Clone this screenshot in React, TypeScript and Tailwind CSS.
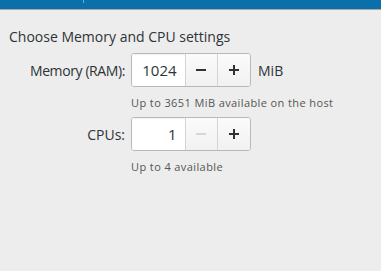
import React from "react";

function Spin({ value, minusDisabled }: { value: string; minusDisabled?: boolean }) {
  return (
    <div className="flex h-[34px] w-[120px] rounded-[3px] border border-[#b9b9b6] bg-white overflow-hidden">
      <div className="flex w-[53px] items-center justify-end pr-[8px] bg-white text-[15px] text-[#2e3436] shadow-[inset_0_1px_1px_rgba(0,0,0,0.06)]">
        {value}
      </div>
      <div className="flex w-[33px] items-center justify-center border-l border-[#d4d4d2] bg-gradient-to-b from-[#fbfbfb] to-[#f1f1f1]">
        <svg width="10" height="2" viewBox="0 0 10 2">
          <rect width="10" height="2" fill={minusDisabled ? "#d6d7d5" : "#2e3436"} />
        </svg>
      </div>
      <div className="flex w-[33px] items-center justify-center border-l border-[#d4d4d2] bg-gradient-to-b from-[#fbfbfb] to-[#f1f1f1]">
        <svg width="10" height="10" viewBox="0 0 10 10">
          <rect x="0" y="4" width="10" height="2" fill="#2e3436" />
          <rect x="4" y="0" width="2" height="10" fill="#2e3436" />
        </svg>
      </div>
    </div>
  );
}

export default function App() {
  return (
    <div
      className="w-[381px] h-[271px] bg-[#ededed] text-[#2e3436] overflow-hidden"
      style={{ fontFamily: '"Open Sans", "Noto Sans", sans-serif' }}
    >
      <div className="relative h-[9px] bg-[#0b6fab] border-b border-[#a8a8a8] box-content">
        <div className="absolute left-[83px] top-0 h-[3px] w-px bg-[#6aa8d6]" />
      </div>
      <div className="pl-[9px] pt-[17px]">
        <div className="text-[14px] leading-[20px]">Choose Memory and CPU settings</div>
        <div className="mt-[6px] grid grid-cols-[116px_auto] gap-x-[6px]">
          <div className="flex items-center justify-end text-[14px] tracking-[-0.4px]">Memory (RAM):</div>
          <div className="flex items-center gap-[7px]">
            <Spin value="1024" />
            <span className="text-[14px]">MiB</span>
          </div>
          <div />
          <div className="mt-[8px] text-[11px] leading-[16px] tracking-[0.4px] text-[#555753]">
            Up to 3651 MiB available on the host
          </div>
          <div className="mt-[6px] flex items-center justify-end text-[14px]">CPUs:</div>
          <div className="mt-[6px]">
            <Spin value="1" minusDisabled />
          </div>
          <div />
          <div className="mt-[8px] text-[11px] leading-[16px] tracking-[0.4px] text-[#555753]">Up to 4 available</div>
        </div>
      </div>
    </div>
  );
}
